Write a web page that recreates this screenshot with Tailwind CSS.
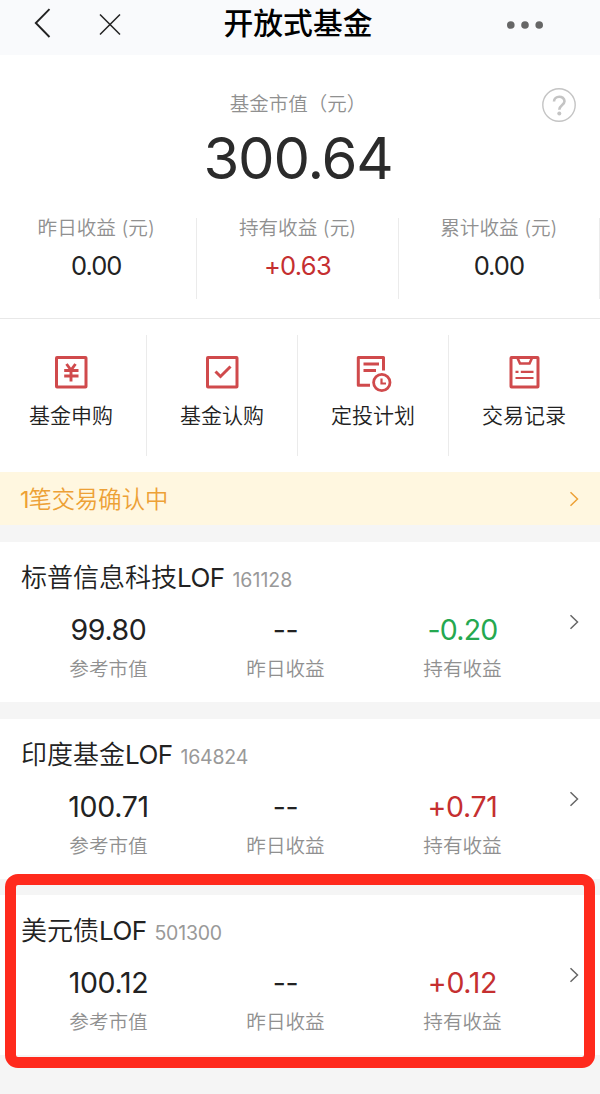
<!DOCTYPE html>
<html lang="zh-CN">
<head>
  <meta charset="UTF-8" />
  <meta name="viewport" content="width=device-width, initial-scale=1.0"/>
  <title>开放式基金</title>
  <script src="https://cdn.jsdelivr.net/npm/@tailwindcss/browser@4"></script>
</head>
<body class="bg-[#f5f5f5] w-[600px] h-[1094px] relative overflow-hidden text-[#222] font-['Inter','Noto_Sans_CJK_SC',sans-serif]">

  <!-- Header -->
  <header class="h-[55px] bg-[#f9fafc] grid grid-cols-3 pb-2">
    <div class="flex items-center pl-[33px] gap-[48px]">
      <svg class="w-[18px] h-[32px]" viewBox="0 0 18 32" fill="none" stroke="#222" stroke-width="1.9"><path d="M16.5 1.2L2.8 15L16.5 29"/></svg>
      <svg class="w-[22px] h-[22px] mt-[2px]" viewBox="0 0 22 22" fill="none" stroke="#222" stroke-width="1.5"><path d="M1 .5L21 20.5M21 .5L1 20.5"/></svg>
    </div>
    <h1 class="text-[29.8px] leading-[47px] font-medium text-black text-center whitespace-nowrap -ml-1">开放式基金</h1>
    <div class="flex items-center justify-end pr-[57px] pt-[3px]">
      <svg class="w-[36px] h-[8px]" viewBox="0 0 36 8" fill="#666"><circle cx="3.8" cy="4" r="3.8"/><circle cx="18" cy="4" r="3.8"/><circle cx="32.2" cy="4" r="3.8"/></svg>
    </div>
  </header>

  <!-- Summary -->
  <section class="bg-white h-[264px] border-b border-[#e8e8e8] pt-[35px]">
    <div class="relative text-center">
      <p class="text-[19.5px] leading-[28px] font-[350] text-[#909090] -ml-1">基金市值（元）</p>
      <p class="text-[58px] leading-[70px] mt-[5px] -ml-1 tracking-[-1.2px] text-[#2b2b2b]">300.64</p>
      <svg class="absolute right-[24px] -top-[2px] w-[34px] h-[34px]" viewBox="0 0 34 34" fill="none" stroke="#c4c4c4"><circle cx="17" cy="17" r="16.2" stroke-width="1.4"/><path d="M12 13.5C12 7.2 22.5 7.2 22.5 13.3C22.5 17 17.3 17 17.3 21.8" stroke-width="2.6"/><circle cx="17.3" cy="25.5" r="2" fill="#c4c4c4" stroke="none"/></svg>
    </div>
    <div class="grid grid-cols-3 w-[604px] -ml-1 mt-[25px] text-center">
      <div class="h-[81px] border-r border-[#ebebeb]">
        <p class="text-[19.6px] leading-[20px] font-[350] text-[#909090]">昨日收益 (元)</p>
        <p class="text-[25.5px] leading-[30px] mt-[13px] tracking-[-1px]">0.00</p>
      </div>
      <div class="h-[81px] border-r border-[#ebebeb]">
        <p class="text-[19.6px] leading-[20px] font-[350] text-[#909090]">持有收益 (元)</p>
        <p class="text-[25.5px] leading-[30px] mt-[13px] tracking-[-0.7px] text-[#c52f30]">+0.63</p>
      </div>
      <div class="h-[81px] border-r border-[#ebebeb]">
        <p class="text-[19.6px] leading-[20px] font-[350] text-[#909090]">累计收益 (元)</p>
        <p class="text-[25.5px] leading-[30px] mt-[13px] tracking-[-1px]">0.00</p>
      </div>
    </div>
  </section>

  <!-- Actions -->
  <nav class="bg-white h-[153px] pt-4">
    <div class="grid grid-cols-4 w-[604px] -ml-1 h-[121px] text-[21px] leading-[30px] font-[350]">
      <a class="flex flex-col items-center pt-[20px] gap-[10px] border-r border-[#ebebeb]">
        <svg class="w-[36px] h-[36px]" viewBox="0 0 36 36" fill="none" stroke="#d04a4c" stroke-width="3"><rect x="3.5" y="2.5" width="29.5" height="29.5" rx=".5"/><path d="M13.5 9L18 15L22.5 9M18 15V26.5M11.2 15.5H25.5M11.2 21H25.5" stroke-width="2.9"/></svg>
        基金申购
      </a>
      <a class="flex flex-col items-center pt-[20px] gap-[10px] border-r border-[#ebebeb]">
        <svg class="w-[36px] h-[36px]" viewBox="0 0 36 36" fill="none" stroke="#d04a4c" stroke-width="3"><rect x="3.5" y="2.5" width="29.5" height="29.5" rx=".5"/><path d="M11.5 16.5L16.5 21.5L26.5 11.5"/></svg>
        基金认购
      </a>
      <a class="flex flex-col items-center pt-[20px] gap-[10px] border-r border-[#ebebeb]">
        <svg class="w-[36px] h-[36px] overflow-visible" viewBox="0 0 36 36" fill="none" stroke="#d04a4c" stroke-width="3"><path d="M15 30.3H3.3V2.5H28.5V15.5" stroke-linejoin="round"/><path d="M8.5 9H24M8.5 15.5H21" stroke-width="2.8"/><circle cx="26.8" cy="27.5" r="8.2" stroke-width="2.8"/><path d="M26.5 23.5V28.5H31" stroke-width="2.2"/></svg>
        定投计划
      </a>
      <a class="flex flex-col items-center pt-[20px] gap-[10px] border-r border-transparent">
        <svg class="w-[36px] h-[36px]" viewBox="0 0 36 36" fill="none" stroke="#d04a4c" stroke-width="3"><rect x="5" y="2.5" width="27" height="29.5" rx=".5"/><path d="M11.5 3L14 8.5H23.5L26 3" stroke-width="2.6"/><path d="M9.5 16.8H12.5M14.8 16.8H27.5M9.5 23H27.5" stroke-width="2.2"/></svg>
        交易记录
      </a>
    </div>
  </nav>

  <!-- Pending notice -->
  <div class="bg-[#fff7e0] h-[53px] flex items-center justify-between pl-5 pr-[21px] text-[#eda136]">
    <span class="text-[23.3px] leading-[53px] pt-px font-[350]"><span class="font-normal tracking-[-1px]">1</span>笔交易确认中</span>
    <svg class="w-[10px] h-[16px] mt-px" viewBox="0 0 10 16" fill="none" stroke="currentColor" stroke-width="1.5"><path d="M1.5 1.2L8.5 8L1.5 14.8"/></svg>
  </div>

  <!-- Holdings -->
  <main class="pt-[17px] flex flex-col gap-[16.6px]">
    <section class="bg-white h-[160px] flex items-center justify-between pl-5 pr-[21px]">
      <div class="w-[531px] h-full pt-[18px]">
        <h2 class="text-[26px] leading-[36px] pl-px font-[350]">标普信息科技<span class="font-normal tracking-[-0.6px]">LOF</span><span class="ml-[8px] text-[19.5px] font-normal text-[#999]">161128</span></h2>
        <div class="grid grid-cols-3 mt-[14px] text-center text-[28.5px] leading-[36px] tracking-[-0.4px]">
          <p>99.80</p><p>--</p><p class="tracking-[-0.8px] text-[#25a850]">-0.20</p>
        </div>
        <div class="grid grid-cols-3 mt-[7px] text-center text-[19.6px] leading-[28px] font-[350] text-[#909090]">
          <p>参考市值</p><p>昨日收益</p><p>持有收益</p>
        </div>
      </div>
      <svg class="w-[10px] h-[16px]" viewBox="0 0 10 16" fill="none" stroke="#666" stroke-width="1.5"><path d="M1.5 1.2L8.5 8L1.5 14.8"/></svg>
    </section>

    <section class="bg-white h-[160px] flex items-center justify-between pl-5 pr-[21px]">
      <div class="w-[531px] h-full pt-[18px]">
        <h2 class="text-[26px] leading-[36px] pl-px font-[350]">印度基金<span class="font-normal tracking-[-0.6px]">LOF</span><span class="ml-[8px] text-[19.5px] font-normal tracking-[-0.2px] text-[#999]">164824</span></h2>
        <div class="grid grid-cols-3 mt-[14px] text-center text-[28.5px] leading-[36px] tracking-[-0.3px]">
          <p>100.71</p><p>--</p><p class="text-[#c52f30]">+0.71</p>
        </div>
        <div class="grid grid-cols-3 mt-[7px] text-center text-[19.6px] leading-[28px] font-[350] text-[#909090]">
          <p>参考市值</p><p>昨日收益</p><p>持有收益</p>
        </div>
      </div>
      <svg class="w-[10px] h-[16px]" viewBox="0 0 10 16" fill="none" stroke="#666" stroke-width="1.5"><path d="M1.5 1.2L8.5 8L1.5 14.8"/></svg>
    </section>

    <section class="bg-white h-[160px] flex items-center justify-between pl-5 pr-[21px]">
      <div class="w-[531px] h-full pt-[18px]">
        <h2 class="text-[26px] leading-[36px] pl-px font-[350]">美元债<span class="font-normal tracking-[-0.6px]">LOF</span><span class="ml-[8px] text-[19.5px] font-normal tracking-[-0.2px] text-[#999]">501300</span></h2>
        <div class="grid grid-cols-3 mt-[14px] text-center text-[28.5px] leading-[36px] tracking-[-0.3px]">
          <p>100.12</p><p>--</p><p class="text-[#c52f30]">+0.12</p>
        </div>
        <div class="grid grid-cols-3 mt-[7px] text-center text-[19.6px] leading-[28px] font-[350] text-[#909090]">
          <p>参考市值</p><p>昨日收益</p><p>持有收益</p>
        </div>
      </div>
      <svg class="w-[10px] h-[16px]" viewBox="0 0 10 16" fill="none" stroke="#666" stroke-width="1.5"><path d="M1.5 1.2L8.5 8L1.5 14.8"/></svg>
    </section>
  </main>

  <!-- Highlight frame over the last holding -->
  <div class="absolute left-[5px] top-[874px] w-[590px] h-[194px] border-[11px] border-[#ff2a1d] rounded-[13px]"></div>
</body>
</html>
